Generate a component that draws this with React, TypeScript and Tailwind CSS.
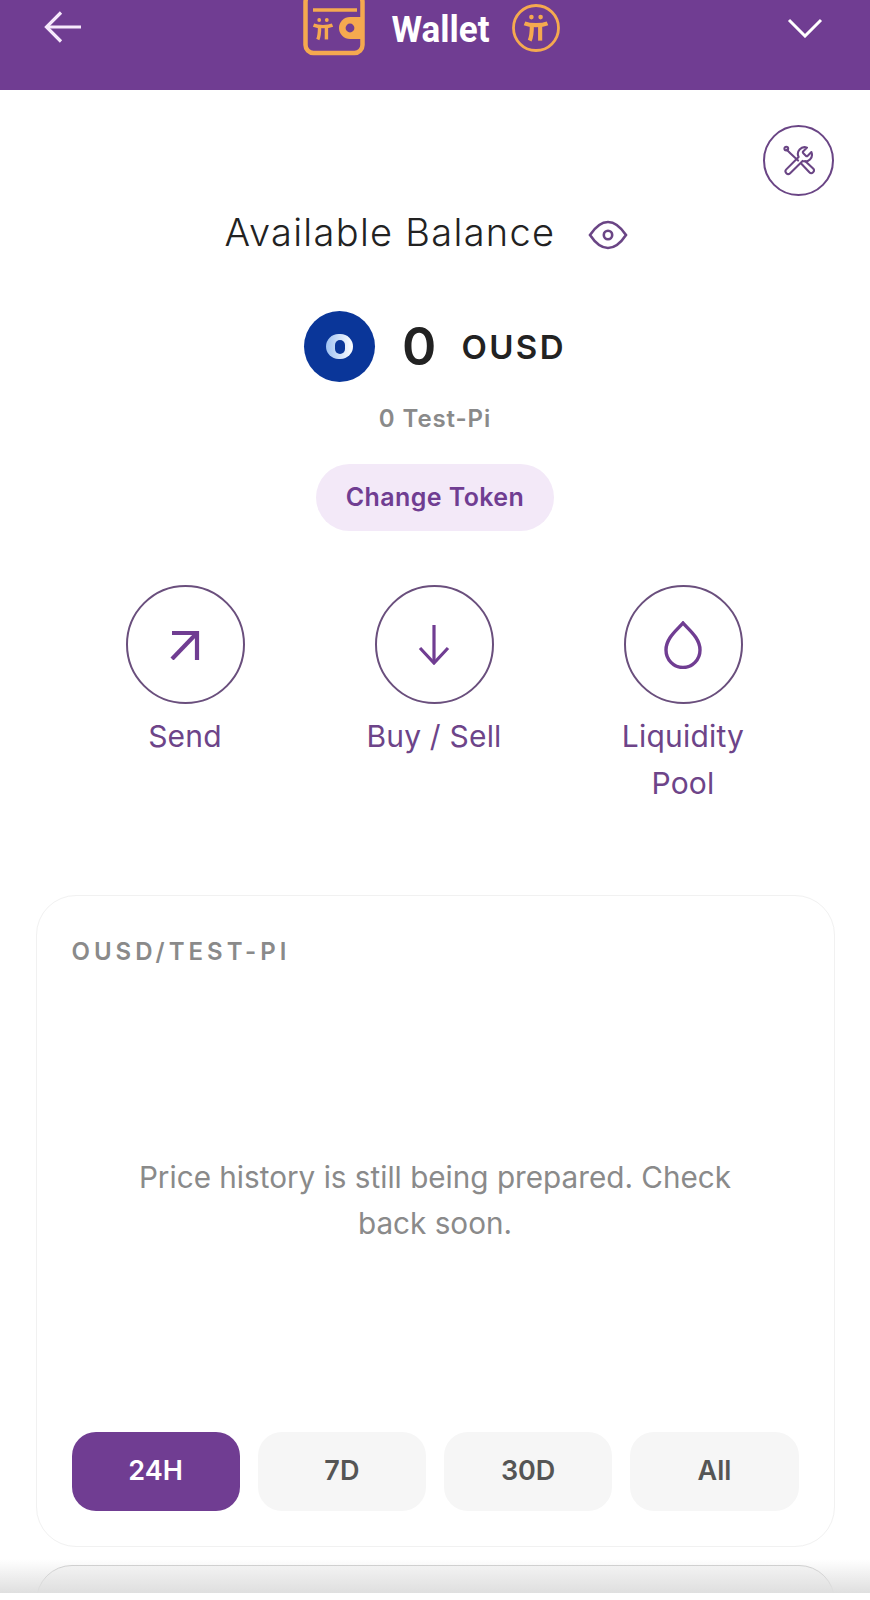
const font = { fontFamily: "Inter, 'Noto Sans', sans-serif" };

// the Pi logo strokes, shared by the wallet and the coin
function PiMark({ x, y, scale }: { x: number; y: number; scale: number }) {
  return (
    <g transform={`translate(${x} ${y}) scale(${scale})`} fill="none" stroke="#f5a94f" strokeWidth="3.6">
      <path d="M-10 -4 C-5 -2 5 -2 10 -4" />
      <path d="M-3.6 -3 C-3.6 3 -4 8 -5.5 11" />
      <path d="M3.6 -3 V11" />
      <circle cx="-4" cy="-9.5" r="2" fill="#f5a94f" stroke="none" />
      <circle cx="4" cy="-9.5" r="2" fill="#f5a94f" stroke="none" />
    </g>
  );
}

function WalletLogo() {
  return (
    <svg width="62" height="56" viewBox="0 0 62 56" className="shrink-0">
      <rect x="2.5" y="-6" width="57" height="59" rx="8" fill="none" stroke="#f5a94f" strokeWidth="4.5" />
      <path d="M10 10 H54" stroke="#f5a94f" strokeWidth="3.5" />
      <path d="M60 17 H47 a11 11 0 0 0 0 22 H60 Z" fill="#f5a94f" />
      <circle cx="47" cy="28" r="4.4" fill="#703d92" />
      <PiMark x={20} y={29} scale={0.95} />
    </svg>
  );
}

function CoinLogo() {
  return (
    <svg width="48" height="48" viewBox="0 0 48 48" className="shrink-0">
      <circle cx="24" cy="24" r="22.5" fill="none" stroke="#f5a94f" strokeWidth="2.8" />
      <PiMark x={24} y={24} scale={1.15} />
    </svg>
  );
}

function ToolsIcon() {
  return (
    <svg width="32" height="32" viewBox="0 0 34 34" fill="none" stroke="#6a4585" strokeWidth="2.2" strokeLinejoin="round" strokeLinecap="round">
      <path d="M23.5 2.8 19.6 6.7 a1.5 1.5 0 0 0 0 2.1 l2.6 2.6 a1.5 1.5 0 0 0 2.1 0 l3.9 -3.9 a7.2 7.2 0 0 1 -9.4 9.4 L5.6 30 a2.9 2.9 0 0 1 -4.1 -4.1 L14.6 12.8 a7.2 7.2 0 0 1 8.9 -10 Z" transform="translate(2 0)" />
      <path d="M4 5 8 9 M8 9 16 16.5 M19.5 20 28 29 a2.8 2.8 0 0 0 4 -4 L23.5 17" />
      <circle cx="3.5" cy="3.8" r="2" />
    </svg>
  );
}

function EyeIcon() {
  return (
    <svg width="40" height="30" viewBox="0 0 40 30" fill="none" stroke="#6a4585" strokeWidth="2.6" className="ml-[33px] mt-[6px] shrink-0">
      <path d="M2 15 C8 6 14 2 20 2 C26 2 32 6 38 15 C32 24 26 28 20 28 C14 28 8 24 2 15 Z" />
      <circle cx="20" cy="15" r="4.2" />
    </svg>
  );
}

function SendIcon() {
  return (
    <svg width="30" height="30" viewBox="0 0 30 30" fill="none" stroke="#703d92" strokeWidth="4.2">
      <path d="M2 3 H27 V30" />
      <path d="M27 3 2 29" />
    </svg>
  );
}

function DownIcon() {
  return (
    <svg width="32" height="40" viewBox="0 0 32 40" fill="none" stroke="#703d92" strokeWidth="3.2">
      <path d="M16 0 V38" />
      <path d="M2 23 16 38 30 23" />
    </svg>
  );
}

function DropIcon() {
  return (
    <svg width="38" height="48" viewBox="0 0 38 48" fill="none" stroke="#703d92" strokeWidth="3.4">
      <path d="M19 2 C25 9 36 17 36 29 A17 17.5 0 0 1 2 29 C2 17 13 9 19 2 Z" />
    </svg>
  );
}

const actions = [
  { label: "Send", icon: <SendIcon /> },
  { label: "Buy / Sell", icon: <DownIcon /> },
  { label: "Liquidity Pool", icon: <DropIcon /> },
];

const ranges = ["24H", "7D", "30D", "All"];

export default function App() {
  return (
    <div style={font} className="relative h-[1593px] w-[870px] overflow-hidden bg-white">
      {/* Header */}
      <div className="relative flex h-[90px] items-start justify-center bg-[#703d92]">
        <svg width="38" height="32" viewBox="0 0 38 32" fill="none" stroke="#f6e9fb" strokeWidth="3.2" className="absolute left-[44px] top-[11px]">
          <path d="M37 16 H3" />
          <path d="M17 1.5 2.5 16 17 30.5" />
        </svg>
        <div className="ml-[-7px] flex items-start">
          <WalletLogo />
          <span className="ml-[26px] mt-[7px] scale-y-[1.08] text-[35px] font-bold leading-[46px] text-white [font-family:Roboto,sans-serif]">Wallet</span>
          <div className="ml-[22px] mt-[4px]">
            <CoinLogo />
          </div>
        </div>
        <svg width="36" height="20" viewBox="0 0 36 20" fill="none" stroke="#ffffff" strokeWidth="3" className="absolute left-[787px] top-[18px]">
          <path d="M2 2 18 18 34 2" />
        </svg>
      </div>

      <div className="flex flex-col items-center">
        {/* Tools button */}
        <div className="mr-[36px] mt-[35px] flex h-[71px] w-[71px] items-center justify-center self-end rounded-full border-2 border-[#6a4585]">
          <ToolsIcon />
        </div>

        {/* Balance */}
        <div className="ml-[-17px] mt-[11px] flex items-center">
          <span className="text-[38px] font-light leading-[50px] tracking-[1.3px] text-[#222222]">Available Balance</span>
          <EyeIcon />
        </div>

        <div className="mt-[54px] flex items-center">
          <div className="flex h-[71px] w-[71px] items-center justify-center rounded-full bg-[#0a3699]">
            <div className="flex h-[25px] w-[27px] items-center justify-center rounded-full bg-gradient-to-r from-[#9fc2f2] to-white">
              <div className="h-[14px] w-[10px] rounded-full bg-[#0a3699]" />
            </div>
          </div>
          <span className="ml-[27px] text-[52px] font-semibold leading-[70px] text-[#222222]">0</span>
          <span className="ml-[25px] text-[33px] font-semibold leading-[44px] tracking-[2.4px] text-[#222222]">OUSD</span>
        </div>

        <p className="mt-[22px] text-[24px] font-semibold leading-[30px] tracking-[0.9px] text-[#8a8a8a]">0 Test-Pi</p>

        <button className="mt-[30px] flex h-[67px] w-[238px] items-center justify-center rounded-full bg-[#f3e9f8] text-[25px] font-semibold tracking-[0.4px] text-[#703d92]">
          Change Token
        </button>

        {/* Actions */}
        <div className="ml-[-2px] mt-[54px] grid w-[747px] grid-cols-3">
          {actions.map((a) => (
            <div key={a.label} className="flex flex-col items-center">
              <div className="flex h-[119px] w-[119px] items-center justify-center rounded-full border-2 border-[#6a4f7d]">
                {a.icon}
              </div>
              <span className="mt-[9px] w-[140px] text-center text-[30px] leading-[47px] tracking-[0.2px] text-[#6d4489]">{a.label}</span>
            </div>
          ))}
        </div>

        {/* Price card */}
        <div className="mt-[88px] flex h-[652px] w-[799px] flex-col rounded-[40px] border border-[#f1f1f1] px-[35px]">
          <p className="mt-[41px] text-[24px] font-semibold uppercase leading-[30px] tracking-[4px] text-[#8a8a8a]">OUSD/Test-Pi</p>
          <p className="mx-auto mt-[187px] w-[620px] text-center text-[29.7px] leading-[46px] text-[#8a8a8a]">
            Price history is still being prepared. Check back soon.
          </p>
          <div className="mt-auto mb-[35px] grid grid-cols-4 gap-[18px]">
            {ranges.map((r, i) => (
              <button
                key={r}
                className={
                  i === 0
                    ? "h-[79px] rounded-[24px] bg-[#703d92] text-[27px] font-semibold text-white"
                    : "h-[79px] rounded-[24px] bg-[#f6f6f6] text-[27px] font-semibold text-[#555555]"
                }
              >
                {r}
              </button>
            ))}
          </div>
        </div>

        {/* Next card, cut off by the fold */}
        <div className="mt-[18px] h-[60px] w-[799px] rounded-t-[36px] border border-[#cccccc] bg-[#f7f7f7]" />
      </div>

      {/* Bottom fade */}
      <div className="absolute bottom-0 left-0 h-[34px] w-full bg-gradient-to-b from-transparent to-[#dfdfdf]" />
    </div>
  );
}
